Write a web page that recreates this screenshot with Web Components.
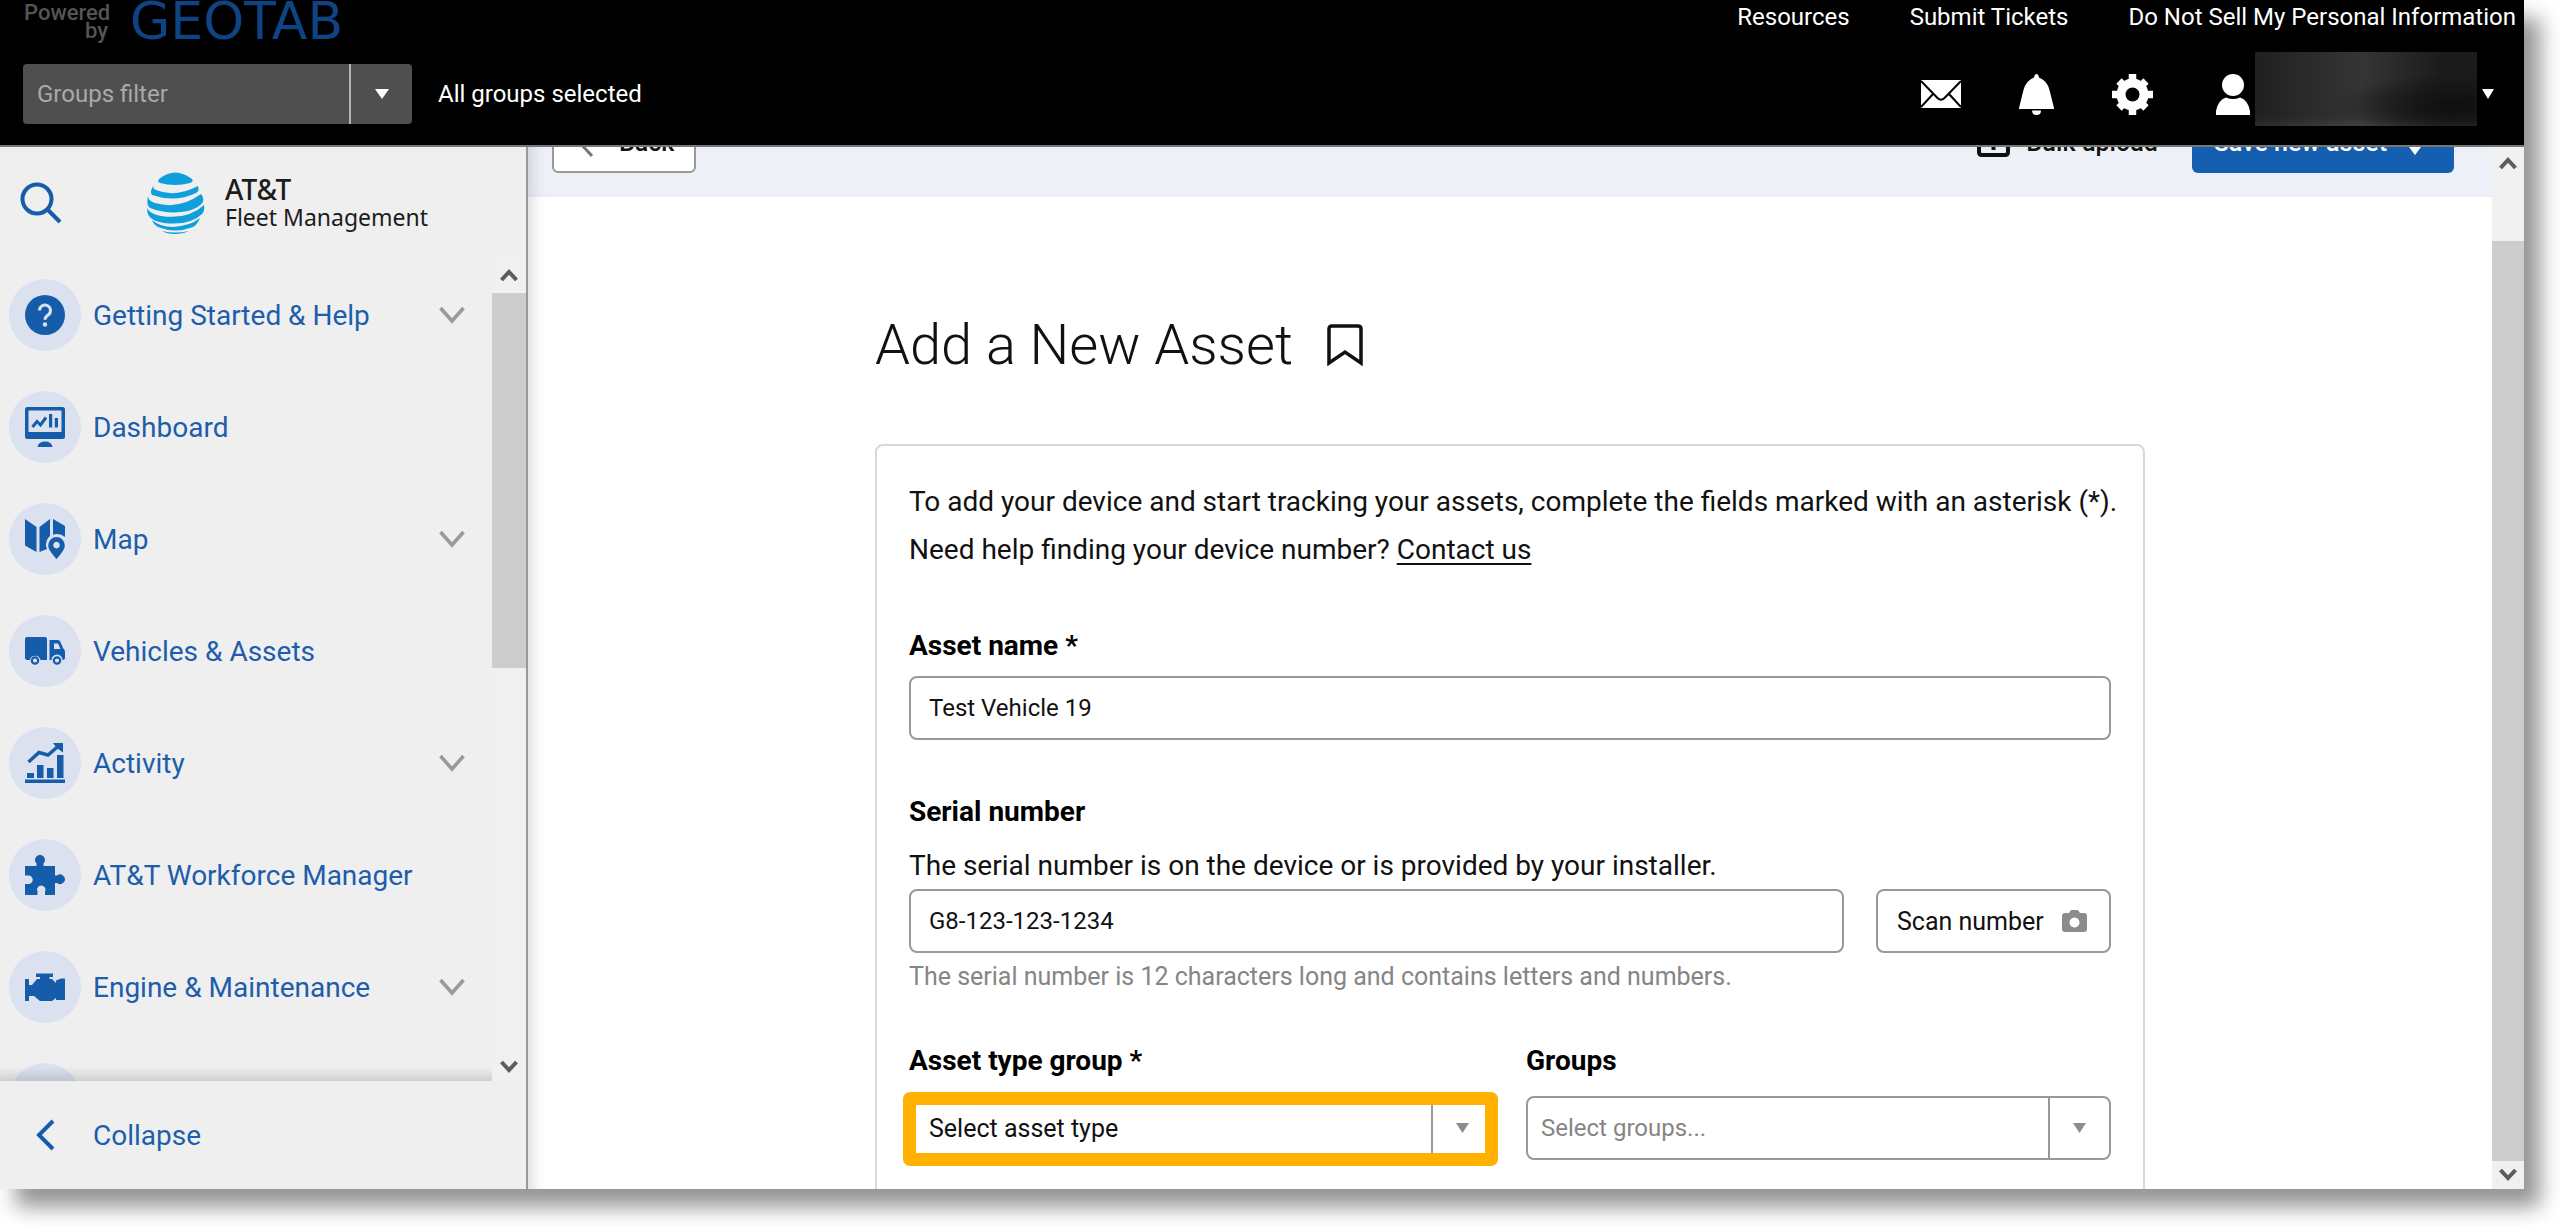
<!DOCTYPE html>
<html lang="en">
<head>
<meta charset="utf-8">
<title>Add a New Asset</title>
<style>
  html, body { margin: 0; height: 100%; background: #fff; }
  body { font-family: Roboto, "Liberation Sans", sans-serif; color: #111; overflow: hidden; }
</style>
</head>
<body>
<app-frame>
  <top-bar slot="top"></top-bar>
  <side-nav slot="side">
    <nav-item icon="help" expandable>Getting Started &amp; Help</nav-item>
    <nav-item icon="dashboard">Dashboard</nav-item>
    <nav-item icon="map" expandable>Map</nav-item>
    <nav-item icon="truck">Vehicles &amp; Assets</nav-item>
    <nav-item icon="activity" expandable>Activity</nav-item>
    <nav-item icon="puzzle">AT&amp;T Workforce Manager</nav-item>
    <nav-item icon="engine" expandable>Engine &amp; Maintenance</nav-item>
    <nav-item icon="none"></nav-item>
  </side-nav>
  <page-toolbar></page-toolbar>
  <asset-form></asset-form>
</app-frame>

<script>
const define = (name, html) => customElements.define(name, class extends HTMLElement {
  connectedCallback() {
    if (this.shadowRoot) return;
    const t = document.createElement('template');
    t.innerHTML = '<style>:host,*{box-sizing:border-box}button,input,select{font:inherit;color:inherit;margin:0}svg{display:block;flex:none}</style>' +
      (typeof html === 'function' ? html(this) : html);
    this.attachShadow({ mode: 'open' }).append(t.content.cloneNode(true));
  }
});

const ICONS = {
  none: '',
  help: `<circle cx="20" cy="20" r="20"/><path d="M14.5 15.5a5.5 5.5 0 1 1 8.6 4.6c-2.1 1.4-3.1 2.2-3.1 4.6" fill="none" stroke="#dbe1ee" stroke-width="3"/><circle cx="20" cy="29.5" r="2.2" fill="#dbe1ee"/>`,
  dashboard: `<path fill-rule="evenodd" d="M2.500 0H37.500Q40 0 40 2.500V29.500Q40 32 37.500 32H2.500Q0 32 0 29.500V2.500Q0 0 2.500 0ZM3.500 3.500V25H36.500V3.500Z"/><path d="M12.500 40Q13.500 34.500 20 34.500T27.500 40Z"/><path d="M7.500 20L12 14.500L15.500 18L21 10.500" fill="none" stroke="#155cab" stroke-width="3"/><path d="M24 7h3.200v13.500H24zM29.800 11H33v9.500h-3.200z"/>`,
  map: `<path d="M0 0L11.500 8V33L0 26.500ZM14.500 8L25 0V17Q21 20 21 27L22 30L14.500 33ZM28 0L40 7V18Q36 14.500 31 15L28 15.800Z"/><path fill-rule="evenodd" d="M31.500 18A8.300 8.300 0 0 1 39.800 26.300C39.800 31 35 36 31.500 40C28 36 23.200 31 23.200 26.300A8.300 8.300 0 0 1 31.500 18ZM31.500 22.800a3.300 3.300 0 1 0 .01 0Z"/>`,
  truck: `<path d="M2 6H20Q22 6 22 8V29H15.500A5.500 5.500 0 0 0 4.800 29H1.500L0 27.500V8Q0 6 2 6ZM24.500 9H33Q34.500 9 35.500 11L38 17Q40 18.500 40 21V26.500Q40 29 37.500 29A5.500 5.500 0 0 0 26.500 29H24.500Z"/><path d="M29 12.500H33L35.500 18H29Z" fill="#dbe1ee"/><circle cx="10" cy="29.500" r="3.200" fill="none" stroke="#155cab" stroke-width="2.200"/><circle cx="32" cy="29.500" r="3.200" fill="none" stroke="#155cab" stroke-width="2.200"/>`,
  activity: `<path d="M0 36.500H40V40H0ZM2 30H9V35H2ZM12 22H18.500V35H12ZM22 25H28.500V35H22ZM32 12H38.500V35H32Z"/><path d="M3.500 19L14 9.500L23 12L33.500 3" fill="none" stroke="#155cab" stroke-width="3.400"/><path d="M28 0H38V9.500L34.500 7L31 4Z"/>`,
  puzzle: `<path d="M0 11H11.500V8.500A5 5 0 1 1 18.500 8.500V11H30V20.500H32A4.800 4.800 0 1 1 32 28H30V40H20V36.500A4.200 4.200 0 1 0 12.500 36.500V40H0V29H3.500A4.200 4.200 0 1 0 3.500 20.500H0Z"/>`,
  engine: `<path d="M11 6.500H28V10H24.500V12H27L31 16V13.500L36 11.500H40V33H31V31L27 34H15L9 29H4V34H0V12H4V18H7L12 12H15V10H11Z"/>`
};

define('app-frame', `
<style>
  :host { display: flex; flex-direction: column; height: calc(100vh - 36px); margin-right: 36px; background: #fff; box-shadow: 16px 18px 20px rgba(0,0,0,.42); }
  .body { flex: 1; min-height: 0; display: flex; }
  .main { flex: 1; min-width: 0; overflow: hidden; box-shadow: inset 14px 0 14px -10px rgba(0,0,0,.14); }
</style>
<slot name="top"></slot>
<div class="body">
  <slot name="side"></slot>
  <div class="main"><slot></slot></div>
  <scroll-bar before="6" thumb="92"></scroll-bar>
</div>`);

define('scroll-bar', el => `
<style>
  :host { flex: none; width: 32px; display: flex; flex-direction: column; background: #f0f0f0; }
  svg { margin: 0 auto; }
  .track { flex: 1; display: flex; flex-direction: column; }
  .before { flex: ${el.getAttribute('before')}; }
  .thumb { flex: ${el.getAttribute('thumb')}; background: #cdcdcd; }
  .after { flex: ${el.getAttribute('after') || 0}; }
</style>
<svg width="20" height="34" viewBox="0 0 20 34" fill="none" stroke="#5c5c5c" stroke-width="4"><path d="M2.500 21L10 13L17.500 21"/></svg>
<div class="track"><div class="before"></div><div class="thumb"></div><div class="after"></div></div>
<svg width="20" height="28" viewBox="0 0 20 28" fill="none" stroke="#5c5c5c" stroke-width="4"><path d="M2.500 9L10 17L17.500 9"/></svg>`);

define('top-bar', `
<style>
  :host { display: block; background: #000; border-bottom: 2px solid #777; color: #fff; font-size: 24px; }
  .row { display: flex; align-items: flex-start; }
  .links { height: 44px; padding: 0 8px 0 24px; }
  .powered { width: 84px; color: #555; font-size: 22px; font-weight: 500; line-height: 18px; padding-top: 4px; text-align: right; }
  .logo { margin-left: 22px; font: 52px/42px "DejaVu Sans", sans-serif; color: #0f4484; }
  nav { margin-left: auto; display: flex; gap: 60px; line-height: 34px; }
  a { color: inherit; text-decoration: none; }
  .tools { align-items: center; margin: 20px 0 21px; height: 60px; padding: 0 30px 0 23px; }
  .filter { display: flex; width: 389px; height: 60px; background: #4f4f4f; border-radius: 4px; overflow: hidden; }
  input { flex: 1; min-width: 0; border: 0; background: none; padding: 0 14px; outline: 0; }
  input::placeholder { color: #a9a9a9; opacity: 1; }
  .drop { width: 63px; border: 0; border-left: 2px solid #b5b5b5; background: none; padding: 0; display: grid; place-items: center; }
  .all { margin-left: 26px; }
  .icons { margin-left: auto; display: flex; align-items: center; gap: 58px; height: 60px; }
  .icons button { border: 0; background: none; padding: 0; }
  .icons .user { display: flex; align-items: center; gap: 5px; margin-left: 5px; }
  .name { width: 222px; height: 74px; margin-bottom: 10px; background: radial-gradient(ellipse at 90% 72%, #101010, transparent 42%), linear-gradient(transparent 88%, rgba(255,255,255,.06)), linear-gradient(90deg, #202022, #353535 48%, #1b1b1b 85%); }
</style>
<div class="row links">
  <div class="powered">Powered by</div>
  <div class="logo">GEOTAB</div>
  <nav><a href="#">Resources</a><a href="#">Submit Tickets</a><a href="#">Do Not Sell My Personal Information</a></nav>
</div>
<div class="row tools">
  <div class="filter">
    <input type="text" placeholder="Groups filter" aria-label="Groups filter">
    <button class="drop" aria-label="Open groups filter"><svg width="14" height="10" viewBox="0 0 14 10" fill="#fff"><path d="M0 0H14L7 10Z"/></svg></button>
  </div>
  <span class="all">All groups selected</span>
  <div class="icons">
    <button aria-label="Messages"><svg width="40" height="28" viewBox="0 0 40 28"><path d="M0 0H40V28H0Z" fill="#fff"/><path d="M0 1L16.500 18Q20 21.500 23.500 18L40 1M0 27L12 14M40 27L28 14" fill="none" stroke="#000" stroke-width="2"/></svg></button>
    <button aria-label="Notifications"><svg width="35" height="41" viewBox="0 0 35 41" fill="#fff"><path d="M17.500 0Q19.500 0 20 3.500Q28 6.500 30.500 16L35 34V35H0V34L4.500 16Q7 6.500 15 3.500Q15.500 0 17.500 0ZM13 36.500H22Q22 41 17.500 41T13 36.500Z"/></svg></button>
    <button aria-label="Settings"><svg width="41" height="41" viewBox="0 0 41 41"><circle cx="20.500" cy="20.500" r="11.500" fill="none" stroke="#fff" stroke-width="9"/><path d="M20.500 0V8M20.500 33V41M0 20.500H8M33 20.500H41M7 7L12 12M29 29L34 34M34 7L29 12M12 29L7 34" stroke="#fff" stroke-width="7.500"/></svg></button>
    <button class="user" aria-label="User menu"><svg width="34" height="41" viewBox="0 0 34 41" fill="#fff"><circle cx="17" cy="11" r="11"/><path d="M0 41V37Q2 26 10 23.500Q17 26.500 24 23.500Q32 26 34 37V41Z"/></svg><span class="name"></span><svg width="12" height="10" viewBox="0 0 12 10" fill="#fff"><path d="M0 0H12L6 10Z"/></svg></button>
  </div>
</div>`);

define('side-nav', `
<style>
  :host { flex: none; width: 528px; display: flex; flex-direction: column; background: #efefef; border-right: 2px solid #999; color: #1d5dab; }
  .brand { height: 112px; flex: none; display: flex; align-items: center; padding-left: 20px; }
  .search { border: 0; background: none; padding: 0; }
  .brand .globe { margin-left: 84px; }
  .brand p { margin: 0 0 0 20px; color: #1c1c1c; font: 23px/28px "Noto Sans", sans-serif; }
  .brand strong { display: block; font-weight: 500; font-size: 28px; }
  .mid { flex: 1; min-height: 0; display: flex; }
  .list { flex: 1; min-width: 0; overflow: hidden; position: relative; }
  .list::after { content: ""; position: absolute; inset: auto 0 0 0; height: 14px; background: linear-gradient(transparent, rgba(0,0,0,.13)); }
  .collapse { flex: none; height: 108px; display: flex; align-items: center; border: 0; background: none; padding: 0 0 0 35px; font-size: 28px; gap: 38px; }
  scroll-bar { width: 34px; }
</style>
<div class="brand">
  <button class="search" aria-label="Search"><svg width="42" height="42" viewBox="0 0 42 42" fill="none" stroke="#155cab" stroke-width="4"><circle cx="17" cy="17" r="14.500"/><path d="M27.500 27.500L40 40"/></svg></button>
  <svg class="globe" width="59" height="62" viewBox="0 0 59 62" fill="#0f9fdc">
    <path d="M13 7Q29-6 46 7Q48 10 44 11Q29 15 14 11Q11 10 13 7Z"/>
    <path d="M8 13Q6 17 10 18Q29 26 52 14Q54 19 50 21Q29 31 6 23Q3 20 8 13Z"/>
    <path d="M2 24Q2 29 9 31Q33 38 55 22Q58 25 57 30Q53 36 42 39Q22 43 4 36Q0 33 2 24Z"/>
    <path d="M1 36Q4 42 15 44Q42 48 58 33Q59 39 56 42Q44 54 18 51Q6 49 3 44Q1 41 1 36Z"/>
    <path d="M6 48Q14 55 27 55Q44 54 54 46Q51 53 47 55Q29 62 12 55Q8 53 6 48Z"/>
    <path d="M16 59Q29 62 43 59Q37 62 29 62T16 59Z"/>
  </svg>
  <p><strong>AT&amp;T</strong>Fleet Management</p>
</div>
<div class="mid"><div class="list"><slot></slot></div><scroll-bar before="0" thumb="375" after="385"></scroll-bar></div>
<button class="collapse"><svg width="20" height="32" viewBox="0 0 20 32" fill="none" stroke="#155cab" stroke-width="4"><path d="M18 2L4 16L18 30"/></svg>Collapse</button>`);

define('nav-item', el => `
<style>
  :host { display: block; font-size: 28px; }
  a { display: flex; align-items: center; height: 112px; padding: 0 27px 0 9px; color: inherit; text-decoration: none; }
  .disc { width: 72px; height: 72px; border-radius: 50%; background: #dbe1ee; display: grid; place-items: center; margin-right: 12px; }
  .chev { margin-left: auto; }
</style>
<a href="#"><span class="disc"><svg width="40" height="40" viewBox="0 0 40 40" fill="#155cab">${ICONS[el.getAttribute('icon')]}</svg></span><slot></slot>
${el.hasAttribute('expandable') ? '<svg class="chev" width="26" height="18" viewBox="0 0 26 18" fill="none" stroke="#999" stroke-width="3.500"><path d="M1.500 2L13 15L24.500 2"/></svg>' : ''}</a>`);

define('page-toolbar', `
<style>
  :host { display: flex; height: 50px; overflow: hidden; align-items: flex-end; padding: 0 38px 24px 24px; background: #edf1f7; font-size: 25px; font-weight: 500; box-shadow: inset 14px 0 14px -10px rgba(0,0,0,.14); }
  button { flex: none; height: 62px; border-radius: 6px; display: flex; align-items: center; }
  .back { border: 2px solid #999; background: #fff; padding: 0 20px 0 23px; gap: 26px; }
  .bulk { margin-left: auto; border: 0; background: none; gap: 16px; padding: 0; }
  .save { margin-left: 34px; border: 0; background: #155fb0; color: #fff; padding: 0 30px 0 22px; gap: 19px; }
</style>
<button class="back"><svg width="16" height="30" viewBox="0 0 16 30" fill="none" stroke="#777" stroke-width="3"><path d="M15 1L2 15L15 29"/></svg>Back</button>
<button class="bulk"><svg width="33" height="30" viewBox="0 0 33 30" fill="none" stroke="#111" stroke-width="4"><path d="M8 7H5Q2 7 2 10V25Q2 28 5 28H28Q31 28 31 25V10Q31 7 28 7H25M16.500 23V4M10 9L16.500 3L23 9"/></svg>Bulk upload</button>
<button class="save">Save new asset<svg width="18" height="26" viewBox="0 0 18 26" fill="#fff"><path d="M0 14H18L9 26Z"/></svg></button>`);

define('text-field', el => `
<style>
  :host { display: block; }
  label { display: block; font-size: 28px; line-height: 40px; font-weight: 700; color: #000; margin-bottom: 10px; }
  .hint { font-size: 28px; line-height: 40px; margin: 14px 0 3px; }
  label.tight { margin: 0; }
  .row { display: flex; gap: 32px; }
  input { flex: 1; min-width: 0; height: 64px; border: 2px solid #999; border-radius: 8px; background: #fff; padding: 0 18px; font-size: 24px; outline: 0; }
</style>
<label for="f" class="${el.hasAttribute('hint') ? 'tight' : ''}">${el.getAttribute('label')}</label>
${el.hasAttribute('hint') ? `<div class="hint">${el.getAttribute('hint')}</div>` : ''}
<div class="row"><input id="f" type="text" value="${el.getAttribute('value')}"><slot></slot></div>`);

define('combo-field', el => `
<style>
  :host { display: block; flex: 1; min-width: 0; }
  label { display: block; font-size: 28px; line-height: 40px; font-weight: 700; color: #000; margin-bottom: 15px; }
  .box { display: flex; height: 64px; border: 2px solid #999; border-radius: 8px; position: relative; font-size: 24px; background: #fff; }
  select, input { flex: 1; min-width: 0; appearance: none; border: 0; outline: 0; background: none; padding: 0 18px; }
  select { font-size: 25px; }
  input { padding: 0 13px; }
  input::placeholder { color: #858585; opacity: 1; }
  .drop { width: 61px; border: 0; border-left: 2px solid #999; background: none; padding: 0; display: grid; place-items: center; }
  :host([highlight]) .box::after { content: ""; position: absolute; inset: -6px -6px -8px -8px; border: 13px solid #ffb000; border-radius: 7px; pointer-events: none; }
</style>
<label for="c">${el.getAttribute('label')}</label>
<div class="box">${el.hasAttribute('placeholder')
  ? `<input id="c" type="text" placeholder="${el.getAttribute('placeholder')}">`
  : `<select id="c"><option>${el.getAttribute('value')}</option></select>`}
<button class="drop" aria-label="Show options"><svg width="13" height="10" viewBox="0 0 13 10" fill="#8c8c8c"><path d="M0 0H13L6.500 10Z"/></svg></button></div>`);

define('asset-form', `
<style>
  :host { display: block; width: 1270px; max-width: 94%; margin: 0 auto; padding-top: 116px; }
  header { display: flex; align-items: center; gap: 34px; margin-bottom: 67px; }
  h1 { margin: 0; font-size: 56px; line-height: 64px; font-weight: 300; }
  .mark { border: 0; background: none; padding: 0; }
  form { border: 2px solid #d5d8de; border-radius: 8px; padding: 32px 32px 96px; font-size: 28px; }
  p { margin: 0 0 52px; line-height: 48px; }
  .lead { white-space: nowrap; }
  a { color: inherit; text-underline-offset: 4px; text-decoration-thickness: 2px; }
  text-field { margin-bottom: 52px; }
  text-field.serial { margin-bottom: 8px; }
  .scan { flex: none; width: 235px; height: 64px; border: 2px solid #999; border-radius: 8px; background: #fff; font-size: 25px; color: #111; display: flex; align-items: center; justify-content: space-between; padding: 0 22px 0 19px; }
  .note { color: #858585; font-size: 25px; line-height: 32px; margin-bottom: 48px; }
  .pair { display: flex; gap: 32px; }
</style>
<header><h1>Add a New Asset</h1><button class="mark" aria-label="Bookmark"><svg width="36" height="42" viewBox="0 0 36 42" fill="none" stroke="#111" stroke-width="3.500"><path d="M2 39V5Q2 2 5 2H31Q34 2 34 5V39L18 28Z"/></svg></button></header>
<form>
  <p class="lead">To add your device and start tracking your assets, complete the fields marked with an asterisk (*).<br>Need help finding your device number? <a href="#">Contact us</a></p>
  <text-field label="Asset name *" value="Test Vehicle 19"></text-field>
  <text-field class="serial" label="Serial number" hint="The serial number is on the device or is provided by your installer." value="G8-123-123-1234"><button type="button" class="scan">Scan number<svg width="25" height="22" viewBox="0 0 25 22" fill="#8c8c8c"><path fill-rule="evenodd" d="M9 0H16L18 3H22Q25 3 25 6V19Q25 22 22 22H3Q0 22 0 19V6Q0 3 3 3H7ZM12.500 7.500a5 5 0 1 0 .01 0Z"/></svg></button></text-field>
  <div class="note">The serial number is 12 characters long and contains letters and numbers.</div>
  <div class="pair">
    <combo-field highlight label="Asset type group *" value="Select asset type"></combo-field>
    <combo-field label="Groups" placeholder="Select groups..."></combo-field>
  </div>
</form>`);
</script>
</body>
</html>
